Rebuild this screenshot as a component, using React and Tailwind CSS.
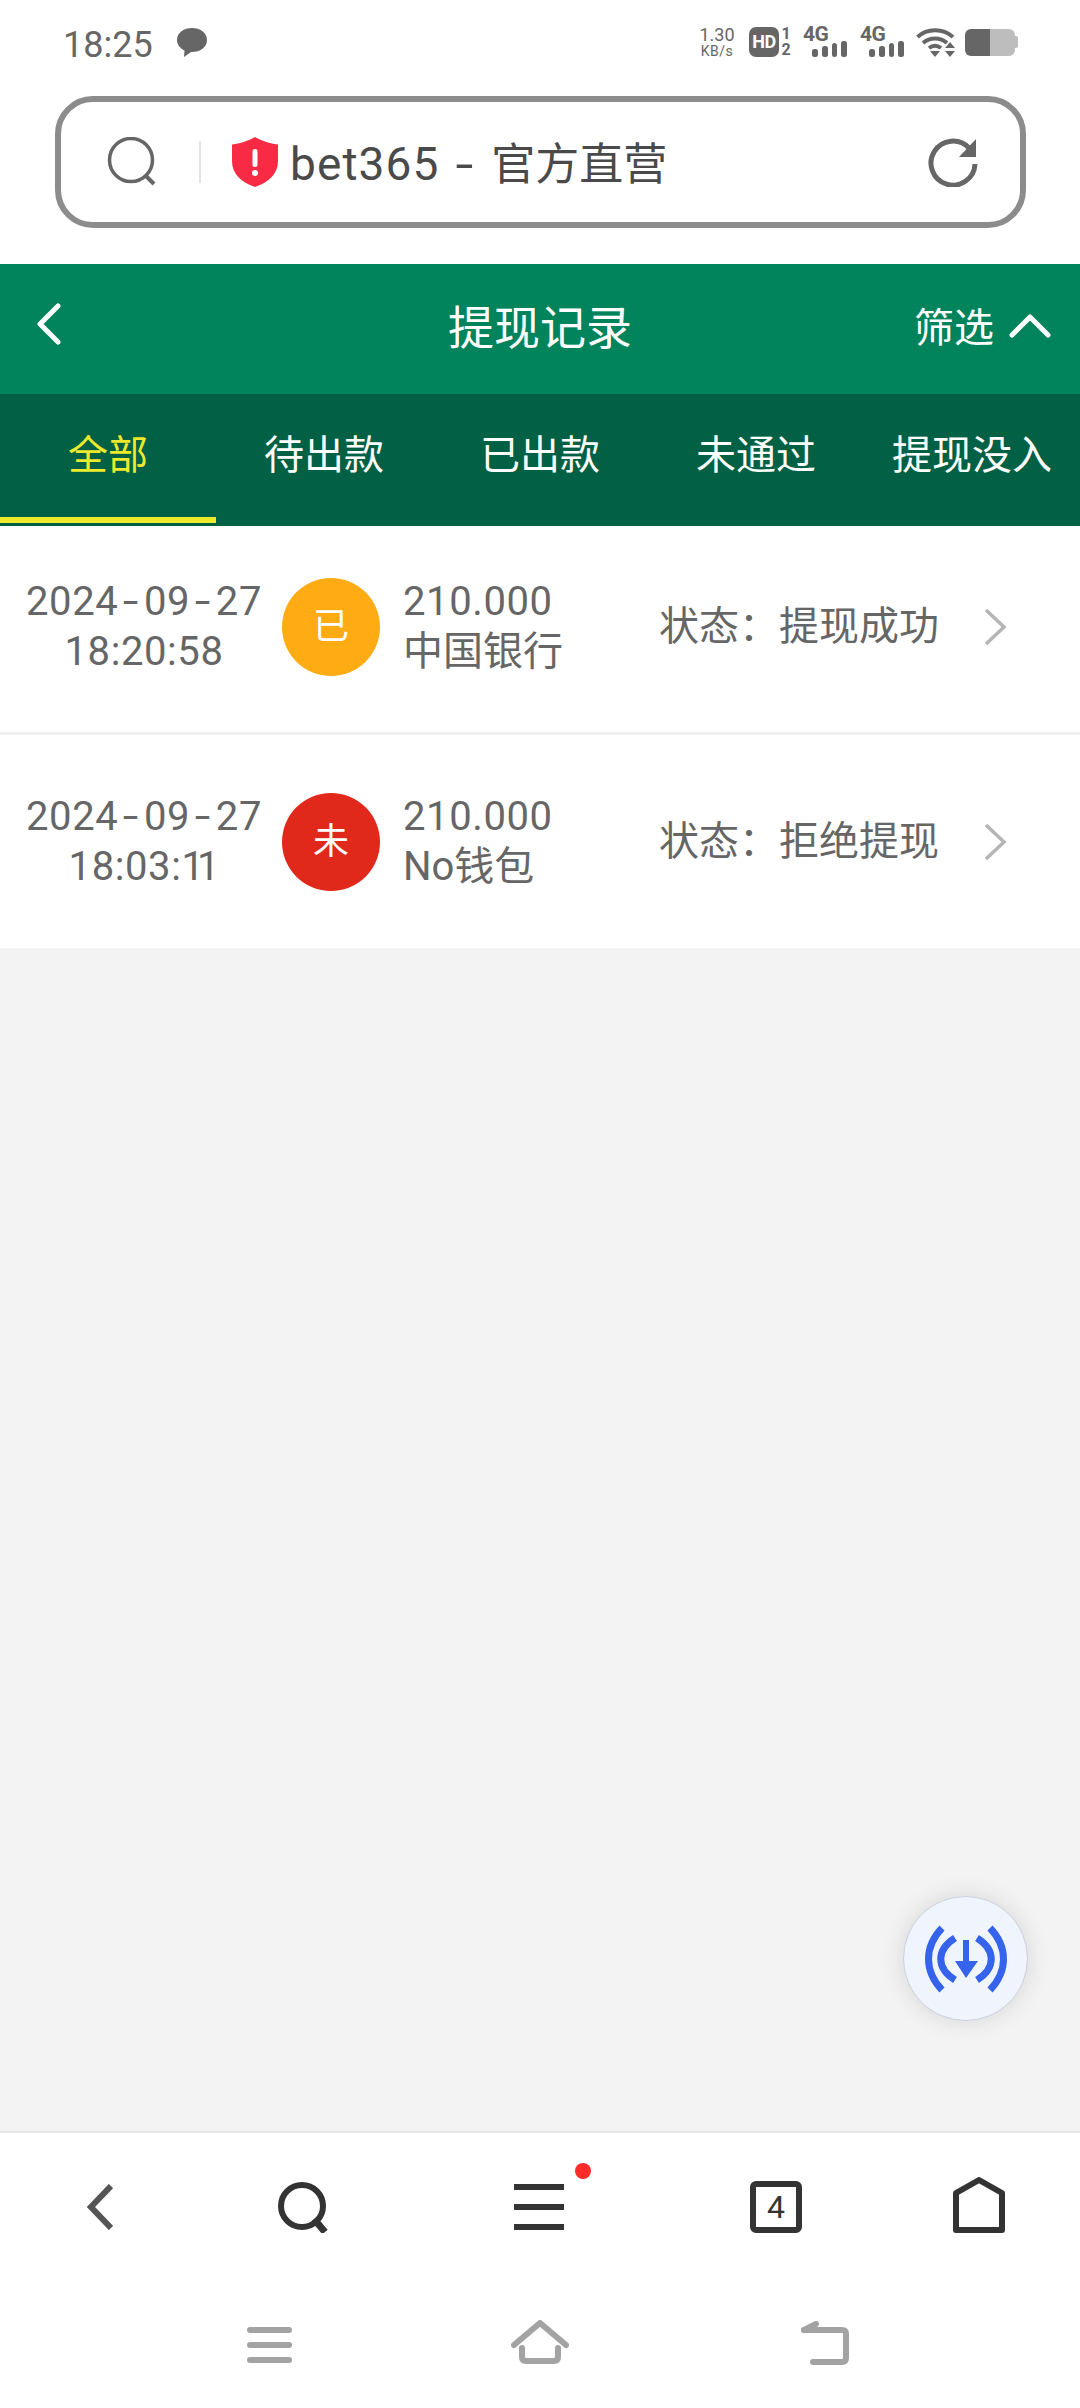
import React from "react";

const Bars = () => (
  <svg width="35" height="16" viewBox="0 0 35 16" className="block">
    <rect x="0" y="8" width="6" height="8" rx="2.500" fill="#666" />
    <rect x="10" y="5" width="6" height="11" rx="2.500" fill="#666" />
    <rect x="20" y="2" width="5" height="14" rx="2.500" fill="#666" />
    <rect x="29" y="0" width="6" height="16" rx="2.500" fill="#666" />
  </svg>
);

const Signal = () => (
  <div className="relative w-[44px] h-[30px]">
    <span className="absolute left-0 top-[-3px] text-[21px] leading-[20px] font-bold text-[#666] tracking-[-0.5px]">4G</span>
    <div className="absolute left-[9px] bottom-0"><Bars /></div>
  </div>
);

const StatusBar = () => (
  <div className="h-[96px] shrink-0 flex items-start justify-between pt-[27px] pl-[63px] pr-[62px] bg-white">
    <div className="flex items-center h-[30px] gap-[24px] mt-[3px]">
      <span className="text-[36px] leading-[30px] text-[#666]">18:25</span>
      <svg width="30" height="30" viewBox="0 0 30 30" className="block -translate-y-[2px]">
        <path d="M15 0C7 0 0 4.500 0 12c0 5 3.500 8.500 7.500 10.500L7 29l7-5h1c8 0 15-4.500 15-12S23 0 15 0z" fill="#666" />
      </svg>
    </div>
    <div className="flex items-center h-[30px]">
      <div className="flex flex-col items-center w-[36px] text-[#666]">
        <span className="text-[18px] leading-[18px]">1.30</span>
        <span className="text-[14px] leading-[14px] tracking-[0.5px]">KB/s</span>
      </div>
      <div className="ml-[14px] w-[30px] h-[30px] rounded-[7px] bg-[#666] flex items-center justify-center text-white text-[18px] font-bold leading-none tracking-[-0.5px]">HD</div>
      <div className="ml-[2px] w-[10px] flex flex-col items-center text-[#666] font-bold text-[16px] leading-[16px]">
        <span>1</span>
        <span>2</span>
      </div>
      <div className="ml-[12px]"><Signal /></div>
      <div className="ml-[13px]"><Signal /></div>
      <svg width="40" height="30" viewBox="0 0 40 30" className="block ml-[12px]">
        <path d="M1.500 10C11 1 27 1 37 10" fill="none" stroke="#666" strokeWidth="4" />
        <path d="M7 16C14 10 24 10 31 16" fill="none" stroke="#666" strokeWidth="4" />
        <path d="M13 21C17 18 21 18 25 21" fill="none" stroke="#666" strokeWidth="4" />
        <path d="M14 24h10l-5 6z" fill="#666" />
        <path d="M34 15l5 6h-10zM34 30l-5-6h10z" fill="#666" />
      </svg>
      <div className="ml-[9px] flex items-center">
        <div className="w-[25px] h-[27px] bg-[#666] rounded-l-[6px]" />
        <div className="w-[25px] h-[27px] bg-[#bdbdbd] rounded-r-[6px]" />
        <div className="w-[3px] h-[12px] bg-[#bdbdbd] rounded-r-[2px]" />
      </div>
    </div>
  </div>
);

const AddressBar = () => (
  <div className="h-[168px] shrink-0 bg-white pl-[55px] pr-[54px]">
    <div className="h-[132px] border-[6px] border-[#8c8c8c] rounded-[38px] flex items-center pl-[46px] pr-[42px]">
      <svg width="50" height="50" viewBox="0 0 50 50" className="block shrink-0">
        <circle cx="24" cy="23" r="21.500" fill="none" stroke="#666" strokeWidth="3.500" />
        <path d="M38 38l9 9" stroke="#666" strokeWidth="4" />
      </svg>
      <div className="ml-[42px] w-[2px] h-[42px] bg-[#e4e4e4] shrink-0" />
      <svg width="46" height="50" viewBox="0 0 46 50" className="block ml-[31px] shrink-0">
        <path d="M23 0c6 3.500 13 6 23 7.500V24c0 13-9 21-23 26C9 45 0 37 0 24V7.500C10 6 17 3.500 23 0z" fill="#f92b44" />
        <rect x="20.500" y="12" width="5" height="18" rx="2.500" fill="#fff" />
        <circle cx="23" cy="36" r="3" fill="#fff" />
      </svg>
      <span className="ml-[12px] text-[46px] leading-none text-[#4a4a4a] whitespace-pre flex-1 translate-y-[2px]">
        <span className="tracking-[1.1px]">bet365</span>
        <span className="inline-block scale-x-[1.4] ml-[19px] mr-[20px]">-</span>
        <span className="text-[44px]">官方直营</span>
      </span>
      <svg width="50" height="50" viewBox="0 0 50 50" className="block shrink-0">
        <path d="M41 11A22 22 0 1 0 47 27" fill="none" stroke="#666" strokeWidth="5" />
        <path d="M48 2v18H31z" fill="#666" />
      </svg>
    </div>
  </div>
);

const Header = () => (
  <div className="h-[130px] shrink-0 bg-[#01835b] relative flex items-center justify-between pl-[37px] pr-[29px] text-white">
    <svg width="24" height="42" viewBox="0 0 24 42" className="block -translate-y-[5px]">
      <path d="M21 3L3 21l18 18" fill="none" stroke="#fff" strokeWidth="5" strokeLinecap="round" strokeLinejoin="round" />
    </svg>
    <span className="absolute left-0 right-0 text-center text-[46px] leading-[60px] -translate-y-[1px] pointer-events-none">提现记录</span>
    <div className="flex items-center gap-[15px]">
      <span className="text-[40px] leading-[50px]">筛选</span>
      <svg width="42" height="26" viewBox="0 0 42 26" className="block -translate-y-[3px]">
        <path d="M3 22L21 4l18 18" fill="none" stroke="#fff" strokeWidth="5" strokeLinecap="round" strokeLinejoin="round" />
      </svg>
    </div>
  </div>
);

const tabs = ["全部", "待出款", "已出款", "未通过", "提现没入"];

const Tabs = () => (
  <div className="h-[132px] shrink-0 bg-[#026044] grid grid-cols-5">
    {tabs.map((t, i) => (
      <div key={t} className="relative flex items-start justify-center pt-[37px]">
        <span className={i === 0 ? "text-[40px] leading-[50px] text-[#ede92c] whitespace-nowrap" : "text-[40px] leading-[50px] text-white whitespace-nowrap"}>{t}</span>
        {i === 0 && <div className="absolute left-0 right-0 bottom-[3px] h-[6px] bg-[#ede92c]" />}
      </div>
    ))}
  </div>
);

const Dash = () => <span className="inline-block scale-x-[1.4] mx-[7px]">-</span>;

const Row = ({ time, mark, color, bank, status, h }) => (
  <div className={`${h} flex items-center bg-white text-[40px] leading-[50px] text-[#666]`}>
    <div className="w-[282px] pl-[26px] pr-[20px] text-center tracking-[0.6px] shrink-0">
      <div className="whitespace-nowrap">2024<Dash />09<Dash />27</div>
      <div className="whitespace-nowrap">{time}</div>
    </div>
    <div className={`${color} w-[98px] h-[98px] rounded-full flex items-center justify-center text-white text-[36px] shrink-0`}>{mark}</div>
    <div className="ml-[23px] w-[256px] shrink-0">
      <div className="tracking-[0.6px]">210.000</div>
      <div className="whitespace-nowrap">{bank}</div>
    </div>
    <div className="whitespace-nowrap">状态：{status}</div>
    <svg width="26" height="40" viewBox="0 0 26 40" className="block ml-[43px]">
      <path d="M4 3l18 17L4 37" fill="none" stroke="#b5b5b5" strokeWidth="3.500" />
    </svg>
  </div>
);

const BottomNav = () => (
  <div className="h-[277px] shrink-0 bg-white border-t-[2px] border-[#e6e6e6] flex flex-col">
    <div className="h-[140px] pt-[48px]">
      <div className="grid grid-cols-[200px_206px_266px_208px_198px] w-full">
        <div className="flex justify-center">
          <svg width="26" height="46" viewBox="0 0 26 46" className="block mt-[3px]">
            <path d="M24 2L4 23l20 21" fill="none" stroke="#555" strokeWidth="6" strokeLinejoin="miter" />
          </svg>
        </div>
        <div className="flex justify-center">
          <svg width="50" height="51" viewBox="0 0 50 51" className="block mt-[1px]">
            <circle cx="24" cy="24" r="21" fill="none" stroke="#333" strokeWidth="6" />
            <path d="M36 37l11 13" stroke="#333" strokeWidth="7" />
          </svg>
        </div>
        <div className="flex justify-center">
          <div className="relative w-[50px] h-[46px] flex flex-col justify-between mt-[3px]">
            <div className="h-[6px] bg-[#333]" />
            <div className="h-[6px] bg-[#333]" />
            <div className="h-[6px] bg-[#333]" />
            <div className="absolute right-[-27px] top-[-21px] w-[16px] h-[16px] rounded-full bg-[#ff2a2a]" />
          </div>
        </div>
        <div className="flex justify-center">
          <div className="w-[52px] h-[52px] border-[6px] border-[#333] rounded-[6px] flex items-center justify-center text-[32px] leading-none text-[#333]">4</div>
        </div>
        <div className="flex justify-center">
          <svg width="52" height="56" viewBox="0 0 52 56" className="block -mt-[4px]">
            <path d="M26 3L49 16V53H3V16z" fill="none" stroke="#333" strokeWidth="6" strokeLinejoin="round" />
          </svg>
        </div>
      </div>
    </div>
    <div className="flex items-start pl-[247px] pt-[47px]">
      <div className="w-[45px] h-[36px] mt-[7px] flex flex-col justify-between">
        <div className="h-[6px] rounded-full bg-[#a3a3a3]" />
        <div className="h-[6px] rounded-full bg-[#a3a3a3]" />
        <div className="h-[6px] rounded-full bg-[#a3a3a3]" />
      </div>
      <svg width="58" height="44" viewBox="0 0 58 44" className="block ml-[219px]">
        <path d="M3 25L29 3l26 22" fill="none" stroke="#a3a3a3" strokeWidth="6" strokeLinecap="round" strokeLinejoin="round" />
        <path d="M11 28v9q0 4 4 4h28q4 0 4-4v-9" fill="none" stroke="#a3a3a3" strokeWidth="6" strokeLinecap="round" />
      </svg>
      <svg width="48" height="44" viewBox="0 0 48 44" className="block ml-[232px] mt-[1px]">
        <path d="M3 9h38q4 0 4 4v24q0 4-4 4H12" fill="none" stroke="#a3a3a3" strokeWidth="6" strokeLinecap="round" />
        <path d="M3 9l12-6" fill="none" stroke="#a3a3a3" strokeWidth="6" strokeLinecap="round" />
      </svg>
    </div>
  </div>
);

export default function App() {
  return (
    <div className="w-[1080px] h-[2408px] flex flex-col bg-[#f3f3f3] overflow-hidden font-['Roboto','Noto_Sans_CJK_SC',sans-serif]">
      <StatusBar />
      <AddressBar />
      <Header />
      <Tabs />
      <div className="flex-1 relative">
        <Row h="h-[206px] pb-[5px]" time="18:20:58" mark="已" color="bg-[#ffac14]" bank="中国银行" status="提现成功" />
        <div className="h-[3px] bg-[#f0f0f0]" />
        <Row
          h="h-[213px]"
          time={<>18:03:<span className="tracking-[-7px] mr-[7px]">11</span></>}
          mark="未"
          color="bg-[#e0291b]"
          bank="No钱包"
          status="拒绝提现"
        />
        <div className="absolute left-[903px] top-[1370px] w-[125px] h-[125px] rounded-full bg-[#eff4fd] border border-[#c9d2e0] shadow-[0_0_24px_rgba(0,0,0,0.12)] flex items-center justify-center">
          <svg width="84" height="68" viewBox="0 0 84 68" className="block">
            <path d="M18 3C0 22 0 46 18 65" fill="none" stroke="#3563ec" strokeWidth="7" />
            <path d="M66 3c18 19 18 43 0 62" fill="none" stroke="#3563ec" strokeWidth="7" />
            <path d="M31 13C12 25 12 43 31 55" fill="none" stroke="#3563ec" strokeWidth="7" />
            <path d="M53 13c19 12 19 30 0 42" fill="none" stroke="#3563ec" strokeWidth="7" />
            <path d="M39 15h6v21h9L42 53 31 36h8z" fill="#3563ec" />
          </svg>
        </div>
      </div>
      <BottomNav />
    </div>
  );
}
